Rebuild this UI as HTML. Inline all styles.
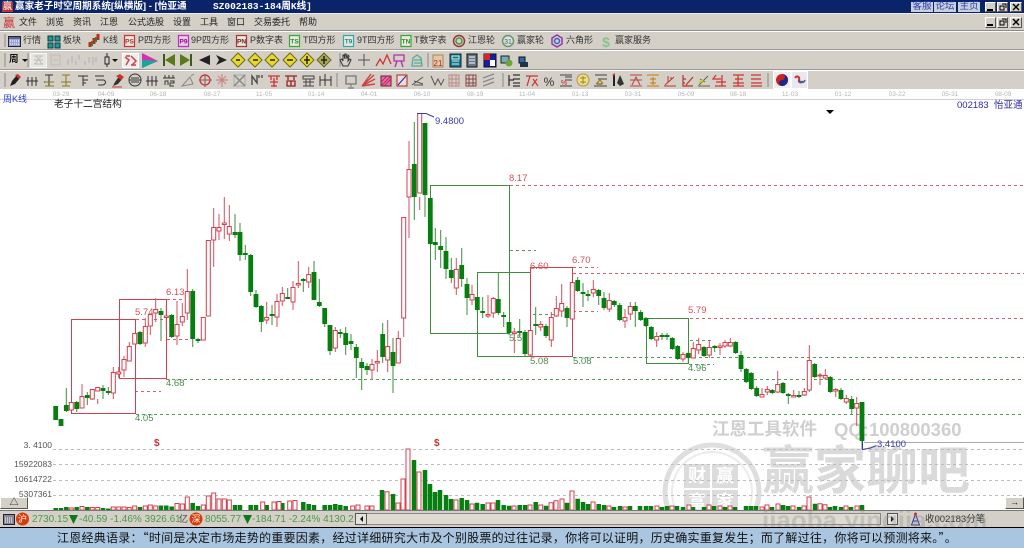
<!DOCTYPE html>
<html lang="zh-CN"><head><meta charset="utf-8"><title>赢家老子时空周期系统</title>
<style>
html,body{margin:0;padding:0;background:#fff}
#p{position:relative;width:1024px;height:548px;overflow:hidden;background:#fff;font-family:"Liberation Sans","WenQuanYi Zen Hei","Noto Sans CJK SC",sans-serif}
.a{position:absolute;white-space:nowrap;line-height:1}
.b{position:absolute}
.m{font-size:9px;color:#222;top:18px}
.t{font-size:9px;color:#333;top:36px}
.d{font-size:6.5px;color:#b4b4b4;top:92px;width:30px;text-align:center}
.v{font-size:8.5px;color:#555;font-family:"Liberation Sans",sans-serif;text-align:right;left:0;width:52px}
.w{background:#d4d0c8;border:1px solid;border-color:#fff #555 #555 #fff;box-sizing:border-box;color:#111;text-align:center}
.s{font-size:10px;color:#4a9a4a;top:515px;font-family:"Liberation Sans",sans-serif}
.q{font-size:9.5px;top:2px;height:10px;width:22px;background:#c8d0dc;color:#2a3ab0;text-align:center}
svg{position:absolute;left:0;top:0}
</style></head><body><div id="p">
<div class="b" style="left:0;top:0;width:1024px;height:13px;background:#0a246a"></div>
<div class="b" style="left:0;top:13px;width:1024px;height:76px;background:#d4d0c8"></div>
<div class="b" style="left:0;top:13px;width:1024px;height:1px;background:#eee"></div>
<div class="b" style="left:0;top:30px;width:1024px;height:1px;background:#8c8c8c"></div>
<div class="b" style="left:0;top:31px;width:1024px;height:1px;background:#fff"></div>
<div class="b" style="left:0;top:49px;width:1024px;height:1px;background:#9a9a9a"></div>
<div class="b" style="left:0;top:50px;width:1024px;height:1px;background:#fff"></div>
<div class="b" style="left:0;top:69px;width:1024px;height:1px;background:#9a9a9a"></div>
<div class="b" style="left:0;top:70px;width:1024px;height:1px;background:#fff"></div>

<div class="a" style="left:2px;top:2px;width:11px;height:10px;background:#b33;color:#fff;font-size:9.5px;text-align:center">赢</div>
<div class="a" style="left:15px;top:2px;font-size:9.6px;font-weight:bold;color:#fff">赢家老子时空周期系统[纵横版] - [怡亚通</div>
<div class="a" style="left:213px;top:2px;font-size:9.5px;font-weight:bold;color:#fff;font-family:'Liberation Mono','WenQuanYi Zen Hei',monospace">SZ002183-184周K线]</div>
<div class="a q" style="left:911px">客服</div>
<div class="a q" style="left:934px">论坛</div>
<div class="a q" style="left:958px">主页</div>
<div class="a w" style="left:985px;top:2px;width:11px;height:10px"></div><div class="a w" style="left:997px;top:2px;width:11px;height:10px"></div><div class="a w" style="left:1010px;top:2px;width:12px;height:10px"></div>
<div class="a w" style="left:985px;top:17px;width:11px;height:11px"></div><div class="a w" style="left:997px;top:17px;width:11px;height:11px"></div><div class="a w" style="left:1010px;top:17px;width:12px;height:11px"></div>

<div class="a" style="left:3px;top:17px;color:#c33;font-size:12px">赢</div>
<div class="a m" style="left:19px">文件</div><div class="a m" style="left:46px">浏览</div><div class="a m" style="left:73px">资讯</div><div class="a m" style="left:100px">江恩</div><div class="a m" style="left:128px">公式选股</div><div class="a m" style="left:173px">设置</div><div class="a m" style="left:200px">工具</div><div class="a m" style="left:227px">窗口</div><div class="a m" style="left:254px">交易委托</div><div class="a m" style="left:299px">帮助</div>

<div class="a t" style="left:23px">行情</div><div class="a t" style="left:63px">板块</div><div class="a t" style="left:103px">K线</div><div class="a t" style="left:138px">P四方形</div><div class="a t" style="left:191px">9P四方形</div><div class="a t" style="left:250px">P数字表</div><div class="a t" style="left:303px">T四方形</div><div class="a t" style="left:357px">9T四方形</div><div class="a t" style="left:414px">T数字表</div><div class="a t" style="left:468px">江恩轮</div><div class="a t" style="left:517px">赢家轮</div><div class="a t" style="left:566px">六角形</div><div class="a t" style="left:615px">赢家服务</div>
<div class="a" style="left:9px;top:55px;font-size:9.5px;font-weight:bold;color:#111">周</div>

<!-- toolbar icons -->
<svg width="1024" height="89" viewBox="0 0 1024 89" fill="none">
<path d="M987 10h6M987 25h6" stroke="#000" stroke-width="2"/>
<path d="M1000 6h4v4h-4zM1002 4h4v4M1000 21h4v4h-4zM1002 19h4v4" stroke="#000"/>
<path d="M1013 4l6 6M1019 4l-6 6M1013 19l6 6M1019 19l-6 6" stroke="#000" stroke-width="1.400"/>
<path d="M5 34v13M5 53v14M5 73v14M337 73v14M503 73v14M768 73v14M28 53v14M340 53v14M428 53v14" stroke="#8a8a8a"/>
<path d="M8.500 36.500h12v10h-12z" fill="#9aa6d8" stroke="#223"/><path d="M9 38h11" stroke="#223"/><path d="M10 41h9M10 44h9" stroke="#fff" stroke-dasharray="1 1"/>
<path d="M48 36h5v5h-5zM55 36h5v5h-5zM48 43h5v5h-5zM55 43h5v5h-5z" fill="#1a9a9a" stroke="#0a3a3a"/>
<path d="M90 47v-5M94 44v-6M98 40v-6" stroke="#c22" stroke-width="3"/><path d="M92 46v-5M96 42v-5" stroke="#283" stroke-width="2"/>
<g stroke-width="1.200" fill="#ece8e0"><path d="M124.500 35.500h10v11h-10z" stroke="#c33"/><path d="M178.500 35.500h10v11h-10z" stroke="#b3b" fill="#eec8ee"/><path d="M236.500 35.500h10v11h-10z" stroke="#a33"/><path d="M289.500 35.500h10v11h-10z" stroke="#3a3"/><path d="M343.500 35.500h10v11h-10z" stroke="#3aa"/><path d="M401 35.500h10v11h-10z" stroke="#3a3"/></g>
<g font-size="6.500" font-weight="bold" font-family="Liberation Sans,sans-serif" text-anchor="middle"><text x="129.500" y="43.500" fill="#a33">PS</text><text x="183.500" y="43.500" fill="#818">P9</text><text x="241.500" y="43.500" fill="#622">PN</text><text x="294.500" y="43.500" fill="#383">TS</text><text x="348.500" y="43.500" fill="#288">T9</text><text x="406" y="43.500" fill="#383">TN</text></g>
<circle cx="459" cy="41" r="5.500" stroke="#933" stroke-width="1.500"/><circle cx="459" cy="41" r="3" stroke="#494" stroke-width="1.500"/>
<circle cx="508" cy="41" r="5.500" stroke="#696" stroke-width="1.500" fill="#dde"/><text x="508" y="44" font-size="7" fill="#373" text-anchor="middle" font-family="Liberation Sans,sans-serif">31</text>
<path d="M557 35l5 3v6l-5 3-5-3v-6z" stroke="#93a" stroke-width="1.500"/><circle cx="557" cy="41" r="2.500" stroke="#36b" stroke-width="1.500"/>
<text x="606" y="47" font-size="14" font-weight="bold" fill="#8ac48a" text-anchor="middle" font-family="Liberation Sans,sans-serif">$</text>

<path d="M22 59h6l-3 3z" fill="#111"/><path d="M112 59h6l-3 3z" fill="#111"/>
<path d="M30.500 53.500h16v14h-16z" fill="#e8e6e0" stroke="#f4f4f4"/><path d="M34 56h9M34 60h9M34 64h9M36 56l6 8M41 56l-6 8" stroke="#bbb"/>
<path d="M51 55h9v10h-9zM53 60h5" stroke="#bbb"/><path d="M68 65v-6M72 63v-7M76 65v-4M79 60v-5" stroke="#bbb" stroke-width="1.500"/><path d="M85 65v-4M89 63v-6M93 65v-8M96 62v-5" stroke="#bbb" stroke-width="1.500"/>
<path d="M105 57h4v7h-4zM107 53v4M107 64v3" stroke="#222"/>
<path d="M122.500 53.500h16v14h-16z" fill="#eee" stroke="#fff"/><path d="M125 57l4 3-3 5M131 56l5 5-4 4M126 56h4M131 65h5" stroke="#c44" stroke-width="1.500"/>
<path d="M142 53v15l16-7z" fill="#d92fb4"/><path d="M142 60l16 1-16 7z" fill="#1a9"/>
<path d="M163 54h2v12h-2z" fill="#3a5a1a"/><path d="M175 54v12l-10-6z" fill="#5a7a1a"/><path d="M192 54h-2v12h2z" fill="#3a5a1a"/><path d="M180 54v12l10-6z" fill="#5a7a1a"/>
<path d="M199 60l11-5v10z" fill="#222"/><path d="M216 55l11 5-11 5 3-5z" fill="#222"/>
<g fill="#e8d82a" stroke="#6a6a1a"><path d="M238 53l7 7-7 7-7-7z"/><path d="M255 53l7 7-7 7-7-7z"/><path d="M272 53l7 7-7 7-7-7z"/><path d="M290 53l7 7-7 7-7-7z"/><path d="M307 53l7 7-7 7-7-7z"/><path d="M324 53l7 7-7 7-7-7z" fill="#a8a858"/></g>
<path d="M236 60h4M253 60h5M270 60h5M287 60h6M307 56v8M304 60h6M324 56v8M321 60h6" stroke="#222" stroke-width="1.500"/>
<path d="M343 66l-3-6 2-1 1 2v-6l1 0 1 4v-5l1 0 1 5 1-4 1 1-1 5 2-2 1 1-3 6z" stroke="#333"/>
<path d="M364 54v12M358 60h12" stroke="#555"/><path d="M376 66l4-7 3 5 4-9 4 9" stroke="#c33" stroke-width="1.300"/>
<path d="M394 55h10v6h-10zM397 61l-2 6M401 61l2 6" stroke="#a3a" stroke-width="1.300"/>
<path d="M412 66l1-8 4-3 4 3 1 8zM414 60h7M414 63h7" stroke="#5a9" stroke-width="1.300"/>
<path d="M433 55h10v12h-10z" fill="#e0c8a8" stroke="#a85"/><text x="438" y="66" font-size="8" fill="#b22" text-anchor="middle" font-family="Liberation Sans,sans-serif">21</text>
<path d="M450 54h11v13h-11z" fill="#1a7a8a" stroke="#123"/><path d="M452 56h7v3h-7zM452 61h7M452 64h7" stroke="#cee"/>
<path d="M467 54h10v13h-10z" fill="#678" stroke="#111"/><path d="M469 57h6M469 60h6M469 63h6" stroke="#fff"/>
<path d="M484 54h12v13h-12z" fill="#12a" stroke="#111"/><path d="M484 54h6v6h-6z" fill="#d22"/><path d="M490 60h5v6h-5z" fill="#fff"/>
<path d="M501 56h8v7h-8z" fill="#7ab" stroke="#222"/><circle cx="509" cy="63" r="3.500" fill="#6a3"/><path d="M519 57h6v6h-6z" fill="#36a" stroke="#111"/><path d="M520 62h8v5h-8z" fill="#234"/>

<path d="M10 86l2-5 5-6 3 3-5 6z" fill="#222"/><path d="M15 75l3-1 3 3-2 2z" fill="#c33"/>
<path d="M28 77v9M32 77v9M36 77v9M26 81h12M45 75h8M49 75v11M44 82h10M45 86h8" stroke="#333"/>
<path d="M62 75h8M66 75v11M61 82h10M62 86h8" stroke="#8a7a1a"/><path d="M45 82h9M45 86h9" stroke="#8a7a1a"/>
<path d="M78 76h10M83 76v10M83 80h5M83 83h3" stroke="#333"/>
<path d="M95 76h9M96 80h8c3 2 1 5-2 5h-4" stroke="#333"/>
<path d="M113 86l2-4 5-7 3 3-5 6z" fill="#333"/><path d="M116 76l4-2 4 3-3 3z" fill="#c33"/><path d="M112 87h10" stroke="#c33"/>
<circle cx="135" cy="80" r="6" stroke="#333"/><path d="M129 80h12M131 78h8M131 82h8" stroke="#333"/>
<path d="M148 76v10M152 76v10M156 76v10M146 81h12" stroke="#333"/>
<path d="M165 75v3M169 75v3M173 75v3M163 78h12M165 85v-4h3v4M170 81h4v2h-4v3h4" stroke="#333"/>
<path d="M182 86l8-9 3 7-11 2zM191 76l3-2" stroke="#888"/>
<circle cx="205" cy="80" r="5" stroke="#c33" stroke-width="1.300"/><path d="M199 80h13M205 74v13" stroke="#955"/>
<path d="M216 80h12M222 74v13M218 76l8 8M226 76l-8 8" stroke="#c88" stroke-width="1.200"/>
<path d="M234 75h11v11h-11z" stroke="#aaa"/><path d="M234 75l11 11M245 75l-11 11" stroke="#888" stroke-width="1.500"/>
<path d="M252 85v-9l5 7v-8M259 75v3M262 75v3" stroke="#444" stroke-width="1.300"/>
<path d="M268 76h12M271 76v4M277 76v4M274 78v9M270 82h8M271 86h6" stroke="#c33" stroke-width="1.300"/>
<path d="M285 76h12M288 76v4M294 76v4M287 81h8v5h-8zM291 81v5" stroke="#922" stroke-width="1.300"/>
<path d="M303 76h11v3h-11zM303 82h11M303 86h11M306 79v7M310 79v7" stroke="#444"/>
<path d="M320 76v10M331 76v10M325 74v12M320 80h11" stroke="#333"/>
<path d="M346 76h10v8h-10zM348 88h6" stroke="#777" stroke-width="1.300"/><path d="M351 84v3" stroke="#777"/>
<path d="M362 86l12-11M362 86l13-7M362 86l13-2M362 86l9-12" stroke="#c44" stroke-width="1.400"/>
<path d="M381 76h10v10h-10z" fill="#e6c" stroke="#622"/><path d="M381 86l10-10M384 86l7-7M381 82l6-6" stroke="#b33"/>
<path d="M397 75h10v11h-10z" fill="#e8e0d8" stroke="#b22"/><path d="M398 85l8-9" stroke="#22a"/>
<path d="M412 85l11-8M414 85h9M414 81l9 3" stroke="#555"/><path d="M431 76l4 9 3-6 3 6 3-6" stroke="#555"/>
<path d="M449 75h10v11h-10zM449 79h10M449 83h10M452 75v11M456 75v11" stroke="#b88"/>
<path d="M466 75h10v11h-10zM466 79h10M466 83h10M469 75v11M473 75v11" stroke="#844"/>
<path d="M483 78l11-4M483 82l11-4M483 86l11-4" stroke="#888" stroke-width="1.200"/>
<path d="M509 75v11M513 75h7M513 79h7M513 83h7M513 86h7M509 80h5" stroke="#333" stroke-width="1.300"/>
<path d="M526 76h12M530 76l-3 10M533 79l5 7M537 79l-5 7" stroke="#c33" stroke-width="1.200"/>
<text x="549" y="86" font-size="12" fill="#333" text-anchor="middle" font-family="Liberation Sans,sans-serif">%</text>
<path d="M560 75h12M565 77h7M565 80h7M560 86h12" stroke="#444"/><text x="564" y="85" font-size="7" fill="#c22" text-anchor="middle" font-family="Liberation Sans,sans-serif">%</text>
<circle cx="583" cy="80" r="6" stroke="#a93" fill="#ecdca0"/><path d="M580 78h6M580 82h6M583 76v8" stroke="#a80"/>
<path d="M595 75h12M598 79h9M594 86h13M597 84h5" stroke="#444"/><path d="M596 84l4-4 3 4" stroke="#a80" stroke-width="1.300"/>
<path d="M614 75v11" stroke="#222" stroke-width="2"/><path d="M620 75l4 9-4 2-3-3z" fill="#333"/><path d="M612 75l3-2v3z" fill="#c33"/>
<path d="M630 75h12M630 80h12M630 86h12M632 85l4-8 4 8" stroke="#b44"/>
<path d="M647 75h12M647 86h12M650 79h6M653 77v8M650 83h6" stroke="#c70"/>
<path d="M664 86h12M665 85l9-8M668 76v6M671 77v3" stroke="#b33"/>
<path d="M683 75v11h10M683 79h3M686 85l7-8M683 83h2" stroke="#b33" stroke-width="1.200"/>
<path d="M698 86h12M699 85l9-9M700 79l5 3" stroke="#664"/><path d="M699 83l4-3" stroke="#cc2" stroke-width="2"/>
<path d="M716 75l-3 4h8M722 75v11M716 82h10M715 86h11" stroke="#c33" stroke-width="1.200"/>
<path d="M733 75h11M735 79h8M733 83h11M733 86h11M738 75v11" stroke="#c33" stroke-width="1.200"/>
<path d="M751 75h10M751 79h10M751 83h11M751 86h11" stroke="#c33" stroke-width="1.200"/>
<path d="M773.500 71.500h17v17h-17z" fill="#eee" stroke="#fff"/><circle cx="782" cy="80" r="6" fill="#c22"/><path d="M782 74a6 6 0 0 1 0 12a3 3 0 0 1 0-6a3 3 0 0 0 0-6" fill="#1a2a8a"/>
<path d="M791.500 71.500h16v17h-16z" fill="#e8e8f0" stroke="#fff"/><path d="M795 78c2-3 5-1 4 2s3 3 4 1" stroke="#c33" stroke-width="2"/><path d="M799 80c2 3 5 3 6 0" stroke="#26a" stroke-width="1.500"/>
</svg>

<div class="a d" style="left:46px">03-29</div><div class="a d" style="left:91px">04-09</div><div class="a d" style="left:143px">06-18</div><div class="a d" style="left:197px">08-27</div><div class="a d" style="left:249px">11-05</div><div class="a d" style="left:301px">01-14</div><div class="a d" style="left:354px">04-01</div><div class="a d" style="left:407px">06-10</div><div class="a d" style="left:460px">08-19</div><div class="a d" style="left:512px">11-04</div><div class="a d" style="left:565px">01-13</div><div class="a d" style="left:618px">03-31</div><div class="a d" style="left:671px">06-09</div><div class="a d" style="left:723px">08-18</div><div class="a d" style="left:775px">11-03</div><div class="a d" style="left:828px">01-12</div><div class="a d" style="left:882px">03-22</div><div class="a d" style="left:935px">05-31</div><div class="a d" style="left:988px">08-09</div>
<div class="b" style="left:0;top:99px;width:1024px;height:1px;background:#d0d0d0"></div>
<div class="a" style="left:3px;top:95px;font-size:9px;color:#2a3ad0">周K线</div>
<div class="a" style="left:54px;top:100px;font-size:9.7px;color:#222">老子十二宫结构</div>
<div class="a" style="left:957px;top:101px;font-size:9.5px;color:#2a2aa8">002183</div>
<div class="a" style="left:994px;top:101px;font-size:9.5px;color:#2a2aa8">怡亚通</div>

<!-- watermark -->
<div class="a" style="left:712px;top:421px;font-size:17.5px;font-weight:bold;color:#cfcfcf">江恩工具软件</div>
<div class="a" style="left:834px;top:421px;font-size:18.5px;font-weight:bold;color:#cfcfcf">QQ:100800360</div>
<div class="a" style="left:762px;top:446px;font-size:52px;font-weight:bold;color:#dadada">赢家聊吧</div>
<svg width="1024" height="548" viewBox="0 0 1024 548" fill="none">
<circle cx="712" cy="492" r="47" stroke="#dedede" stroke-width="5"/><circle cx="712" cy="492" r="40" stroke="#ebebeb" stroke-width="2"/>
<path d="M684 464h26v24h-26zM712 464h26v24h-26zM684 490h26v24h-26zM712 490h26v24h-26z" fill="#dcdcdc"/>
</svg>
<div class="a" style="left:688px;top:467px;font-size:18px;font-weight:bold;color:#fff">财</div>
<div class="a" style="left:716px;top:467px;font-size:18px;font-weight:bold;color:#fff">赢</div>
<div class="a" style="left:688px;top:493px;font-size:18px;font-weight:bold;color:#fff">富</div>
<div class="a" style="left:716px;top:493px;font-size:18px;font-weight:bold;color:#fff">家</div>

<!-- chart -->
<svg width="1024" height="548" viewBox="0 0 1024 548" fill="none">
<g stroke-width="1" stroke-dasharray="3 3">
<path d="M510 185.500H1024M573 273.500H1024M690 318.500H1024M135 391.500H161M167 299.500H188M136 319.500H166M167 339.500H190M573 267.500H598M573 311.500H598" stroke="#d9606e"/>
<path d="M573 357.500H1024M166 379.500H1024M136 414.500H1024M510 250.500H536M533 314.500H556M690 340.500H714M689 364.500H714" stroke="#5a9a5a"/>
<path d="M53 449.500H1024M53 464.500H1024M53 480.500H1024M53 495.500H1024" stroke="#bdbdbd"/>
</g>
<path d="M864 442.500H1024" stroke="#aaa"/>
<g stroke="#3e8e3e"><path d="M430.500 185.500h79v148h-79zM477.500 272.500h53v84h-53zM646.500 318.500h42v45h-42z"/></g>
<g stroke="#d4404e"><path d="M71.500 319.500h64v94h-64zM119.500 299.500h47v79h-47zM530.500 267.500h42v89h-42z"/></g>

<path stroke="#d4505e" d="M82 384V396M92.300 399V400M97.700 387V389M97.700 399V404M113.300 367V372M113.300 393V399M118.700 367V378M124 356V359M124 370V377M129.300 342V346M134.700 333V334M145.300 318V326M145.300 343V347M150.300 314V335M155.700 298V322M166.300 305V316M166.300 317V330M177 301V324M177 336V345M182.300 303V316M182.300 322V326M187.300 269V291M187.300 313V320M213.700 208V227M213.700 240V267M219 214V227M219 231V240M224.300 197V239M229.300 205V226M229.300 234V241M266.700 302V324M277 294V327M282.300 287V306M293 281V310M298.300 261V288M308.700 267V288M335.300 327V352M372 359V379M377.300 350V372M387.700 320V372M398.300 331V338M403.700 318V337M409 141V238M419.700 197V210M456.300 258V295M472 285V305M488 295V318M493.300 297V318M514.300 328V353M540.700 321V331M551.300 312V347M556.300 296V317M561.700 284V317M593.300 280V297M609.300 293V312M625 309V328M630.300 302V320M656.700 332V347M683 352V362M693.300 342V358M698.700 338V354M709.300 340V358M720 343V355M725 340V348M730.300 338V347M762 388V397M767.300 386V395M777.700 371V393M793.700 390V397M804.300 388V396M809.300 345V392M820 373V385M825.300 369V380M835.700 388V397M846.300 395V404M856.700 397V426"/>
<path stroke="#3e8e3e" d="M66.300 388V412M76.700 401V412M87.300 392V405M103 385V399M108.300 387V395M140 331V345M161 308V341M171.700 314V338M192.700 289V347M198 338V343M235 214V238M240 223V261M245.300 245V260M250.700 254V296M256 290V308M261.300 305V332M272 305V325M287.700 288V298M303.300 278V292M314 261V300M319.300 279V307M324.700 308V327M330 325V355M340.300 329V338M345.700 327V355M351 334V350M356.300 344V378M361.700 358V390M367 363V375M382.700 323V363M393 338V393M414.300 122V220M425 123V217M430.300 198V245M435.300 228V260M440.700 230V268M446 237V279M451.300 258V283M461.700 248V287M467 278V315M477.300 297V312M482.700 297V318M498.300 272V315M503.700 312V327M509 322V335M519.700 319V337M525 330V356M535.700 307V335M546 324V338M567 306V327M577.700 277V292M583 283V307M588 290V301M598.700 289V305M604 292V310M614.300 300V307M619.700 303V321M635.300 302V327M640.700 310V321M646 317V327M651.300 326V340M662 333V340M667 333V340M672.300 337V350M677.700 345V360M688.300 352V363M704 346V357M714.700 345V352M735.700 341V354M741 351V372M746.300 368V383M751.300 372V390M756.700 386V397M772.300 389V394M783 382V394M788.300 393V404M799 391V398M814.700 363V378M830.300 376V393M841 388V400M851.700 396V414M862 402V449"/>

<path stroke="#067f10" stroke-width="4.800" d="M55.700 406V420M61 419V426M66.300 405V411M76.700 402V409M87.300 395V398M103 388V391M108.300 391V393M140 332V344M161 311V315M171.700 315V337M192.700 291V339M198 339V341M235 232V235M240 232V255M245.300 253V255M250.700 255V292M256 294V307M261.300 306V322M272 314V316M287.700 297V299M303.300 279V281M314 272V300M319.300 302V306M324.700 308V324M330 325V351M340.300 332V334M345.700 333V345M351 341V344M356.300 347V358M361.700 362V368M367 366V370M382.700 334V357M393 352V366M414.300 164V197M425 123V195M430.300 198V244M435.300 242V245M440.700 246V250M446 251V269M451.300 270V278M461.700 265V279M467 284V298M477.300 297V310M482.700 311V313M498.300 299V313M503.700 315V317M509 322V333M519.700 331V333M525 332V354M535.700 324V326M546 326V336M567 308V318M577.700 280V291M583 292V294M588 294V296M598.700 290V296M604 298V308M614.300 301V305M619.700 305V320M635.300 306V311M640.700 312V320M646 318V326M651.300 327V339M662 335V337M667 335V337M672.300 338V349M677.700 346V359M688.300 353V358M704 347V356M714.700 346V348M735.700 342V353M741 355V369M746.300 369V382M751.300 373V389M756.700 388V396M772.300 390V393M783 383V393M788.300 394V396M799 395V397M814.700 364V377M830.300 377V392M841 390V399M851.700 399V409M862 402V441"/>

<path stroke="#d4404e" fill="#fff" d="M69.300 402.500h4V410h-4zM80 396.500h4V408h-4zM90.300 389.500h4V399h-4zM95.700 387.500h4V391h-4zM111.300 372.500h4V393h-4zM116.700 372h4V374h-4zM122 359.500h4V370h-4zM127.300 346.500h4V361h-4zM132.700 333.500h4V344h-4zM143.300 326.500h4V343h-4zM148.300 314.500h4V326h-4zM153.700 309.500h4V313h-4zM164.300 316h4V317.500h-4zM175 324.500h4V336h-4zM180.300 316.500h4V322h-4zM185.300 291.500h4V313h-4zM201.300 317.500h4V340h-4zM206.300 240.500h4V316h-4zM211.700 227.500h4V240h-4zM217 227.500h4V231h-4zM222.300 223h4V224.500h-4zM227.300 226.500h4V234h-4zM264.700 317.500h4V320h-4zM275 301.500h4V317h-4zM280.300 293.500h4V301h-4zM291 287.500h4V302h-4zM296.300 283.500h4V285h-4zM306.700 274.500h4V282h-4zM333.300 330.500h4V348h-4zM370 364.500h4V370h-4zM375.300 361.500h4V363h-4zM385.700 346.500h4V360h-4zM396.300 338.500h4V363h-4zM401.700 217.500h4V318h-4zM407 169.500h4V197h-4zM417.700 113.500h4V193h-4zM454.300 269.500h4V288h-4zM470 294.500h4V300h-4zM486 314.500h4V316h-4zM491.300 298.500h4V313h-4zM512.300 332h4V333.500h-4zM528.300 330.500h4V355h-4zM538.700 324.500h4V327h-4zM549.300 317.500h4V340h-4zM554.300 308.500h4V316h-4zM559.700 303.500h4V311h-4zM570.300 282.500h4V319h-4zM591.300 289.500h4V293h-4zM607.300 300.500h4V309h-4zM623 317.500h4V321h-4zM628.300 306.500h4V314h-4zM654.700 336.500h4V340h-4zM681 354.500h4V359h-4zM691.300 348.500h4V358h-4zM696.700 344.500h4V350h-4zM707.300 347.500h4V355h-4zM718 346h4V347.500h-4zM723 342.500h4V346h-4zM728.300 342.500h4V346h-4zM760 394.500h4V397h-4zM765.300 389.500h4V392h-4zM775.700 384.500h4V392h-4zM791.700 395.500h4V397h-4zM802.300 391.500h4V395h-4zM807.300 360.500h4V390h-4zM818 375h4V376h-4zM823.300 375.500h4V378h-4zM833.700 389.500h4V391h-4zM844.300 398.500h4V402h-4zM854.700 403.500h4V408h-4z"/>

<path stroke="#067f10" stroke-width="4.500" d="M55.700 508V510M61 508V510M66.300 507V510M76.700 507V510M87.300 507V510M103 508V510M108.300 508.500V510M140 507V510M161 505.500V510M166.300 505.500V510M171.700 506.500V510M192.700 503V510M198 506V510M235 505V510M240 505V510M250.700 505V510M256 505V510M266.700 505V510M282.300 503V510M303.300 502V510M308.700 504V510M314 505V510M324.700 505V510M330 505V510M335.300 504V510M340.300 505V510M345.700 506V510M382 490V510M393 494V510M414 460V510M425 470V510M430 484V510M435 492V510M440 490V510M446 495V510M451 499V510M461.700 498V510M467 500V510M477 502.700V510M482.700 504V510M498 500V510M503.700 505V510M509 505.700V510M519.700 505V510M525 505V510M535.700 502V510M546 505.700V510M567 502.700V510M577.700 498.700V510M583 502V510M588 504V510M598.700 504V510M604 505V510M614 507V510M620 506V510M630 506V510M640 506V510M646 506V510M651 506V510M662 507V510M667 506V510M677 506V510M683 507V510M693 507V510M704 507V510M714 506V510M725 507V510M735 507V510M746 506V510M751 506V510M756 506V510M772 507V510M783 505V510M788 506V510M799 507V510M815 503.700V510M830 507V510M835 506V510M841 507V510M851 507V510M862 505V510"/>
<path stroke="#d4404e" fill="#fff" d="M69.300 508h4v2h-4zM80 506.500h4v3.500h-4zM90.300 507.500h4v2.500h-4zM95.700 507.500h4v2.500h-4zM111.300 507h4v3h-4zM116.700 507h4v3h-4zM122 507h4v3h-4zM127.300 507.500h4v2.500h-4zM132.700 506h4v4h-4zM143.300 506h4v4h-4zM148.300 505h4v5h-4zM153.700 506h4v4h-4zM175 503.500h4v6.500h-4zM180.300 504h4v6h-4zM185.300 497h4v13h-4zM201.300 505h4v5h-4zM206.300 496h4v14h-4zM211.700 493h4v17h-4zM217 499h4v11h-4zM222.300 499h4v11h-4zM227.300 500h4v10h-4zM260.700 502h4v8h-4zM272 502h4v8h-4zM277 501.500h4v8.500h-4zM287.700 501h4v9h-4zM293 500.500h4v9.500h-4zM350.700 506h4v4h-4zM356 505h4v5h-4zM365 506h4v4h-4zM370 506h4v4h-4zM385 491.700h4v18.300h-4zM396 503h4v7h-4zM401 479h4v31h-4zM406 449h4v61h-4zM417 472h4v38h-4zM454 500h4v10h-4zM470 504h4v6h-4zM486 503h4v7h-4zM491 503h4v7h-4zM512 506h4v4h-4zM528 505h4v5h-4zM538.700 505h4v5h-4zM549 502.700h4v7.300h-4zM554 500.700h4v9.300h-4zM560 499h4v11h-4zM570 491h4v19h-4zM591 502h4v8h-4zM607 506h4v4h-4zM623 507h4v3h-4zM655 506h4v4h-4zM670 506h4v4h-4zM687 505h4v5h-4zM707 505h4v5h-4zM718 506h4v4h-4zM728 506h4v4h-4zM760 507h4v3h-4zM765 505h4v5h-4zM776 504h4v6h-4zM791 506h4v4h-4zM802 506h4v4h-4zM807 497h4v13h-4zM818 503.700h4v6.300h-4zM823 504.700h4v5.300h-4zM844 506h4v4h-4zM855 506h4v4h-4z"/>
<path d="M417 113.500h9l8 3.500" stroke="#3a3aa8"/><path d="M862.500 441v8.500l8-1.500 6-2.500" stroke="#3a3aa8"/>
<path d="M826 110h8l-4 4z" fill="#000"/>
</svg>

<div class="a" style="left:166px;top:288px;font-size:9.5px;color:#d4505e">6.13</div>
<div class="a" style="left:135px;top:308px;font-size:9.5px;color:#d4505e">5.74</div>
<div class="a" style="left:166px;top:379px;font-size:9.5px;color:#4a8a4a">4.68</div>
<div class="a" style="left:135px;top:414px;font-size:9.5px;color:#4a8a4a">4.05</div>
<div class="a" style="left:509px;top:174px;font-size:9.5px;color:#d4505e">8.17</div>
<div class="a" style="left:530px;top:262px;font-size:9.5px;color:#d4505e">6.60</div>
<div class="a" style="left:572px;top:256px;font-size:9.5px;color:#d4505e">6.70</div>
<div class="a" style="left:688px;top:306px;font-size:9.5px;color:#d4505e">5.79</div>
<div class="a" style="left:509px;top:334px;font-size:9.5px;color:#4a8a4a">5.5</div>
<div class="a" style="left:530px;top:357px;font-size:9.5px;color:#4a8a4a">5.08</div>
<div class="a" style="left:573px;top:357px;font-size:9.5px;color:#4a8a4a">5.08</div>
<div class="a" style="left:688px;top:364px;font-size:9.5px;color:#4a8a4a">4.96</div>
<div class="a" style="left:435px;top:117px;font-size:9.5px;color:#3a3ab0">9.4800</div>
<div class="a" style="left:877px;top:440px;font-size:9.5px;color:#3a3ab0">3.4100</div>
<div class="a" style="left:154px;top:439px;font-size:10px;color:#c33;font-weight:bold">$</div>
<div class="a" style="left:434px;top:439px;font-size:10px;color:#c33;font-weight:bold">$</div>
<div class="a v" style="top:441px">3. 4100</div><div class="a v" style="top:460px">15922083</div><div class="a v" style="top:475px">10614722</div><div class="a v" style="top:490px">5307361</div>

<div class="a w" style="left:0;top:497px;width:28px;height:12px;font-size:9px">△</div>
<div class="a w" style="left:1005px;top:497px;width:19px;height:12px;font-size:9px">→</div>

<!-- status -->
<div class="b" style="left:0;top:510px;width:1024px;height:17px;background:#d4d0c8;border-top:1px solid #777;box-sizing:border-box"></div>
<svg width="1024" height="548" viewBox="0 0 1024 548" fill="none">
<path d="M3.500 514.500h11v10h-11z" fill="#889" stroke="#223"/><path d="M5 518h8M5 520h8M5 522h8" stroke="#fff" stroke-dasharray="1 1"/>
<circle cx="22.500" cy="519" r="6.500" fill="#d83a10"/><circle cx="196" cy="519" r="6.500" fill="#d83a10"/>
<path d="M69 515h9l-4.500 9zM243 515h9l-4.500 9z" fill="#0a7a1a"/>
<path d="M355.500 513.500h11v11h-11z" fill="#e4e2dc" stroke="#555"/><path d="M363 516v6l-3-3z" fill="#111"/>
<path d="M367 514h513v10H367z" fill="#dedad2"/><path d="M367 513.500H880M367 524.500H880M880.500 513v12" stroke="#888"/>
<path d="M887.500 513.500h10v11h-10z" fill="#e4e2dc" stroke="#555"/><path d="M891 516v6l3-3z" fill="#111"/>
<path d="M915.500 514l-4 11h8zM913 521h5" stroke="#339"/><circle cx="915.500" cy="514" r="1.500" fill="#c33"/>
</svg>
<div class="a" style="left:18px;top:514.500px;font-size:9px;color:#ffd">沪</div>
<div class="a" style="left:191.500px;top:514.500px;font-size:9px;color:#ffd">深</div>
<div class="a s" style="left:32px">2730.15</div>
<div class="a s" style="left:79px">-40.59 -1.46% 3926.61</div>
<div class="a" style="left:179px;top:515px;font-size:9px;color:#444">亿</div>
<div class="a s" style="left:205px">8055.77</div>
<div class="a s" style="left:252px">-184.71 -2.24% 4130.2</div>
<div class="a" style="left:925px;top:515px;font-size:9.5px;color:#333">收002183分笔</div>

<div class="a" style="left:762px;top:507px;font-size:26px;font-weight:bold;color:#888;opacity:.3">jiaoba.yingjia.com</div>

<!-- quote -->
<div class="b" style="left:0;top:527px;width:1024px;height:1px;background:#000"></div>
<div class="b" style="left:0;top:528px;width:1024px;height:20px;background:#a9c5e0"></div>
<div class="a" style="left:57px;top:532px;font-size:12px;letter-spacing:.24px;color:#111;font-family:'Noto Sans CJK SC','WenQuanYi Zen Hei',sans-serif">江恩经典语录：“时间是决定市场走势的重要因素，经过详细研究大市及个别股票的过往记录，你将可以证明，历史确实重复发生；而了解过往，你将可以预测将来。”。</div>
</div></body></html>
